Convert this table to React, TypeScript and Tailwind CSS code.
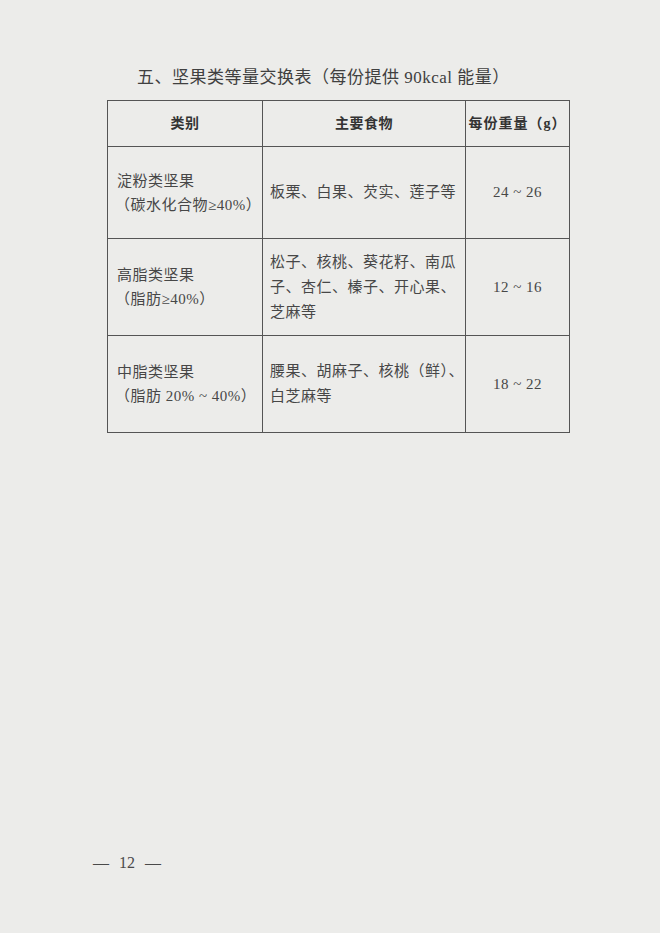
import React from 'react';

const font = { fontFamily: '"Liberation Serif", "Noto Sans CJK SC", serif' };

const rows = [
  {
    cat: ['淀粉类坚果', '（碳水化合物≥40%）'],
    foods: ['板栗、白果、芡实、莲子等'],
    weight: '24 ~ 26',
    h: 'h-[92px]',
  },
  {
    cat: ['高脂类坚果', '（脂肪≥40%）'],
    foods: ['松子、核桃、葵花籽、南瓜', '子、杏仁、榛子、开心果、', '芝麻等'],
    weight: '12 ~ 16',
    h: 'h-[97px]',
  },
  {
    cat: ['中脂类坚果', '（脂肪 20% ~ 40%）'],
    foods: ['腰果、胡麻子、核桃（鲜）、', '白芝麻等'],
    weight: '18 ~ 22',
    h: 'h-[97px]',
  },
];

export default function App() {
  return (
    <div className="w-[660px] h-[933px] bg-[#ececea] text-[#474747] relative overflow-hidden" style={font}>
      <div className="pt-[66px] pl-[137px] text-[17px] leading-[24px] tracking-[0.5px] text-[#404040]">
        五、坚果类等量交换表（每份提供 90kcal 能量）
      </div>

      <table className="ml-[107px] mt-[10px] border-collapse text-[15px] tracking-[0.5px]">
        <thead>
          <tr className="h-[46px]">
            <th className="w-[155px] border border-[#555] font-bold text-[14px] text-[#333]">类别</th>
            <th className="w-[203px] border border-[#555] font-bold text-[14px] text-[#333]">主要食物</th>
            <th className="w-[104px] border border-[#555] font-bold text-[14px] text-[#333] whitespace-nowrap px-0 tracking-[1px]">
              每份重量（g）
            </th>
          </tr>
        </thead>
        <tbody>
          {rows.map((r, i) => (
            <tr key={i} className={r.h}>
              <td className="border border-[#555] pl-[9px] leading-[24px] align-middle whitespace-nowrap">
                {r.cat.map((l, j) => (
                  <div key={j} className={j === 1 ? '-ml-[2px]' : ''}>{l}</div>
                ))}
              </td>
              <td className="border border-[#555] pl-[7px] leading-[25px] align-middle whitespace-nowrap">
                {r.foods.map((l, j) => (
                  <div key={j}>{l}</div>
                ))}
              </td>
              <td className="border border-[#555] text-center align-middle">{r.weight}</td>
            </tr>
          ))}
        </tbody>
      </table>

      <div className="absolute left-[93px] top-[851px] flex gap-[10px] text-[16px] text-[#4a4a4a]">
        <span>—</span>
        <span>12</span>
        <span>—</span>
      </div>
    </div>
  );
}
